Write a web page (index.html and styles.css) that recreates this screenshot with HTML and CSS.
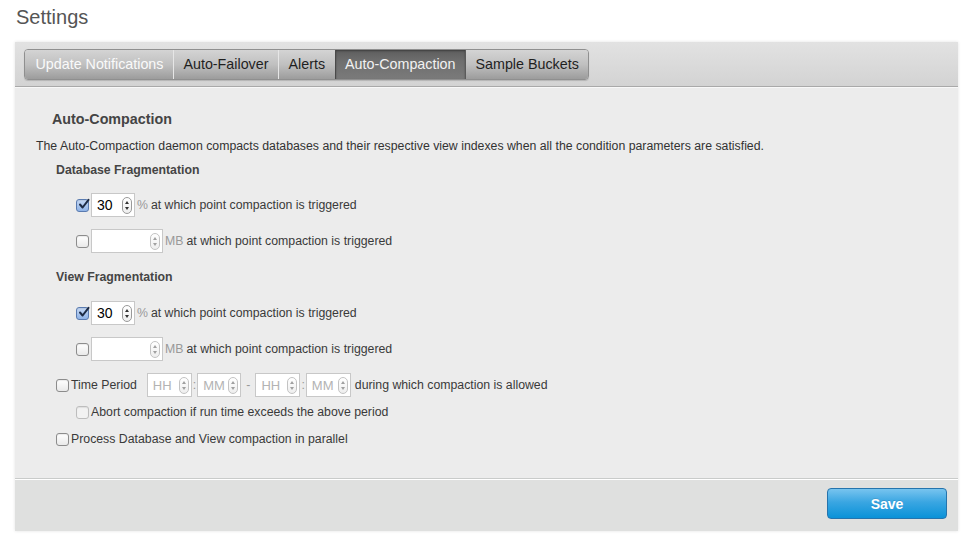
FILE: index.html
```html
<!DOCTYPE html>
<html>
<head>
<meta charset="utf-8">
<link rel="stylesheet" href="styles.css">
</head>
<body>
<h1 class="title">Settings</h1>
<div class="panel">
  <div class="panel-head">
    <div class="tabs">
      <span class="tab tab-muted">Update Notifications</span>
      <span class="tab">Auto-Failover</span>
      <span class="tab">Alerts</span>
      <span class="tab tab-active">Auto-Compaction</span>
      <span class="tab">Sample Buckets</span>
    </div>
  </div>
  <div class="panel-body">
    <h2 class="section-title">Auto-Compaction</h2>
    <p class="desc">The Auto-Compaction daemon compacts databases and their respective view indexes when all the condition parameters are satisfied.</p>

    <h3 class="group-title">Database Fragmentation</h3>
    <div class="row indent">
      <span class="cb cb-on"><svg viewBox="0 0 13 13" width="13" height="13"><path d="M3 6.5 L5.6 9.5 L11.5 1.8" fill="none" stroke="#1d2b44" stroke-width="2" stroke-linecap="round" stroke-linejoin="round"/></svg></span>
      <span class="spin w44"><span class="val">30</span><span class="arrows"><i class="up"></i><i class="dn"></i></span></span>
      <span class="unit">%</span><span class="lbl">at which point compaction is triggered</span>
    </div>
    <div class="row indent gap">
      <span class="cb"></span>
      <span class="spin w72 off"><span class="val"></span><span class="arrows"><i class="up"></i><i class="dn"></i></span></span>
      <span class="unit">MB</span><span class="lbl">at which point compaction is triggered</span>
    </div>

    <h3 class="group-title vf">View Fragmentation</h3>
    <div class="row indent rf">
      <span class="cb cb-on"><svg viewBox="0 0 13 13" width="13" height="13"><path d="M3 6.5 L5.6 9.5 L11.5 1.8" fill="none" stroke="#1d2b44" stroke-width="2" stroke-linecap="round" stroke-linejoin="round"/></svg></span>
      <span class="spin w44"><span class="val">30</span><span class="arrows"><i class="up"></i><i class="dn"></i></span></span>
      <span class="unit">%</span><span class="lbl">at which point compaction is triggered</span>
    </div>
    <div class="row indent gap">
      <span class="cb"></span>
      <span class="spin w72 off"><span class="val"></span><span class="arrows"><i class="up"></i><i class="dn"></i></span></span>
      <span class="unit">MB</span><span class="lbl">at which point compaction is triggered</span>
    </div>

    <div class="row time">
      <span class="cb"></span>
      <span class="lbl tp">Time Period</span>
      <span class="spin w45 off"><span class="val ph">HH</span><span class="arrows"><i class="up"></i><i class="dn"></i></span></span>
      <span class="sep">:</span>
      <span class="spin w44 off"><span class="val ph">MM</span><span class="arrows"><i class="up"></i><i class="dn"></i></span></span>
      <span class="sep dash">-</span>
      <span class="spin w45 off"><span class="val ph">HH</span><span class="arrows"><i class="up"></i><i class="dn"></i></span></span>
      <span class="sep">:</span>
      <span class="spin w45 off"><span class="val ph">MM</span><span class="arrows"><i class="up"></i><i class="dn"></i></span></span>
      <span class="lbl after">during which compaction is allowed</span>
    </div>
    <div class="line abort">
      <span class="cb cb-dis"></span>
      <span class="lbl">Abort compaction if run time exceeds the above period</span>
    </div>
    <div class="line parallel">
      <span class="cb"></span>
      <span class="lbl">Process Database and View compaction in parallel</span>
    </div>
  </div>
  <div class="panel-foot">
    <button class="save">Save</button>
  </div>
</div>
</body>
</html>
```

FILE: styles.css
```css
* { box-sizing: border-box; }
html, body { margin: 0; padding: 0; background: #ffffff; }
body {
  font-family: "Liberation Sans", Arial, Helvetica, sans-serif;
  color: #3f3f3f;
  width: 979px;
  height: 552px;
  overflow: hidden;
}
.title {
  margin: 0;
  padding: 5px 0 0 16px;
  height: 42px;
  font-size: 20px;
  line-height: 24px;
  font-weight: normal;
  color: #555555;
}
.panel {
  margin-left: 15px;
  width: 943px;
  background: #ececec;
  box-shadow: 0 0 3px rgba(0,0,0,0.12);
}
.panel-head {
  height: 45px;
  padding: 7px 0 0 9px;
  background: linear-gradient(#e2e2e2, #d3d3d3);
  border-bottom: 1px solid #a9a9a9;
  box-shadow: 0 1px 0 #f8f8f8;
}
.tabs {
  display: inline-flex;
  height: 31px;
  border: 1px solid #8f8f8f;
  border-radius: 4px;
  overflow: hidden;
  box-shadow: 0 1px 1px rgba(0,0,0,0.15);
}
.tab {
  display: flex;
  align-items: center;
  padding: 0 9.5px 1px;
  font-size: 14.3px;
  color: #1f1f1f;
  background: linear-gradient(#d4d4d4, #c0c0c0 50%, #9c9c9c);
  border-left: 1px solid #e6e6e6;
  height: 100%;
}
.tab:first-child { border-left: none; }
.tab-muted {
  color: #fafafa;
  padding: 0 9.5px 1px 10.5px;
}
.tab-active {
  background: linear-gradient(#5e5e5e, #6f6f6f 40%, #7a7a7a);
  color: #f2f2f2;
  border-left: 1px solid #4a4a4a;
  box-shadow: inset 0 1px 2px rgba(0,0,0,0.35);
}
.tab-active + .tab { border-left: 1px solid #5a5a5a; }
.panel-body {
  padding: 20px 0 30px 21px;
  height: 392px;
  border-bottom: 1px solid #c9cbca;
}
.section-title {
  margin: 0 0 0 16px;
  font-size: 14.3px;
  line-height: 24px;
  font-weight: bold;
  color: #444444;
}
.desc {
  margin: 6px 0 0 0;
  font-size: 12.3px;
  line-height: 18px;
  color: #333333;
}
.group-title {
  margin: 6px 0 0 20px;
  font-size: 12.3px;
  line-height: 18px;
  font-weight: bold;
  color: #454545;
}
.group-title.vf { margin-top: 15px; }
.row {
  display: flex;
  align-items: center;
  height: 24px;
  margin-top: 14px;
  font-size: 12.3px;
}
.row.indent { padding-left: 40px; }
.row.gap { margin-top: 12px; }
.row.rf { margin-top: 15px; }
.row.time { margin-top: 12px; padding-left: 20px; }
.cb {
  display: inline-block;
  width: 13px;
  height: 13px;
  border: 1px solid #8c8c8c;
  border-radius: 3px;
  background: linear-gradient(#ffffff, #e9e9e9);
  box-shadow: inset 0 1px 1px rgba(0,0,0,0.08);
  margin-right: 2px;
  flex: none;
  position: relative;
}
.cb svg { position: absolute; left: 0; top: -2px; }
.cb-on {
  background: linear-gradient(#c6d9f5, #8fb3e6);
  border-color: #5a7bb0;
}
.cb-dis { border-color: #bdbdbd; background: #f2f2f2; }
.spin {
  display: inline-flex;
  align-items: center;
  justify-content: space-between;
  height: 24px;
  background: #ffffff;
  border: 1px solid #c8c8c8;
  padding: 0 2px 0 5px;
  flex: none;
}
.w44 { width: 44px; }
.w45 { width: 45px; }
.w72 { width: 72px; }
.val {
  font-size: 14px;
  color: #000000;
}
.val.ph { color: #b3b3b3; font-size: 13px; }
.arrows {
  display: inline-flex;
  flex-direction: column;
  align-items: center;
  justify-content: center;
  gap: 3px;
  width: 10px;
  height: 17px;
  border: 1px solid #9a9a9a;
  border-radius: 5px;
  background: linear-gradient(#ffffff, #eeeeee);
}
.up, .dn {
  width: 0; height: 0;
  border-left: 2px solid transparent;
  border-right: 2px solid transparent;
}
.up { border-bottom: 3px solid #333; }
.dn { border-top: 3px solid #333; }
.off .arrows { border-color: #c3c3c3; }
.off .up { border-bottom-color: #a0a0a0; }
.off .dn { border-top-color: #a0a0a0; }
.unit { color: #999999; margin-left: 2px; margin-right: 3px; font-size: 12.3px; }
.lbl { color: #3a3a3a; font-size: 12.3px; }
.tp { margin-right: 10px; }
.sep { color: #999999; margin: 0 1px; font-size: 12.3px; }
.sep.dash { margin: 0 5px; }
.after { margin-left: 4px; }
.line {
  display: flex;
  align-items: center;
  height: 18px;
  font-size: 12.3px;
}
.abort { margin-top: 6px; padding-left: 40px; }
.parallel { margin-top: 9px; padding-left: 20px; }
.panel-foot {
  height: 52px;
  border-top: 1px solid #ffffff;
  background: #dfe0df;
  display: flex;
  justify-content: flex-end;
  align-items: flex-start;
  padding: 8px 11px 0 0;
}
.save {
  width: 120px;
  height: 31px;
  border: 1px solid #2574ad;
  border-radius: 4px;
  background: linear-gradient(#78c4ef, #3aa6e2 45%, #0a92d8);
  color: #ffffff;
  font-family: "Liberation Sans", Arial, sans-serif;
  font-size: 14px;
  font-weight: bold;
  padding: 0;
  text-shadow: 0 -1px 0 rgba(0,0,0,0.1);
}
```
